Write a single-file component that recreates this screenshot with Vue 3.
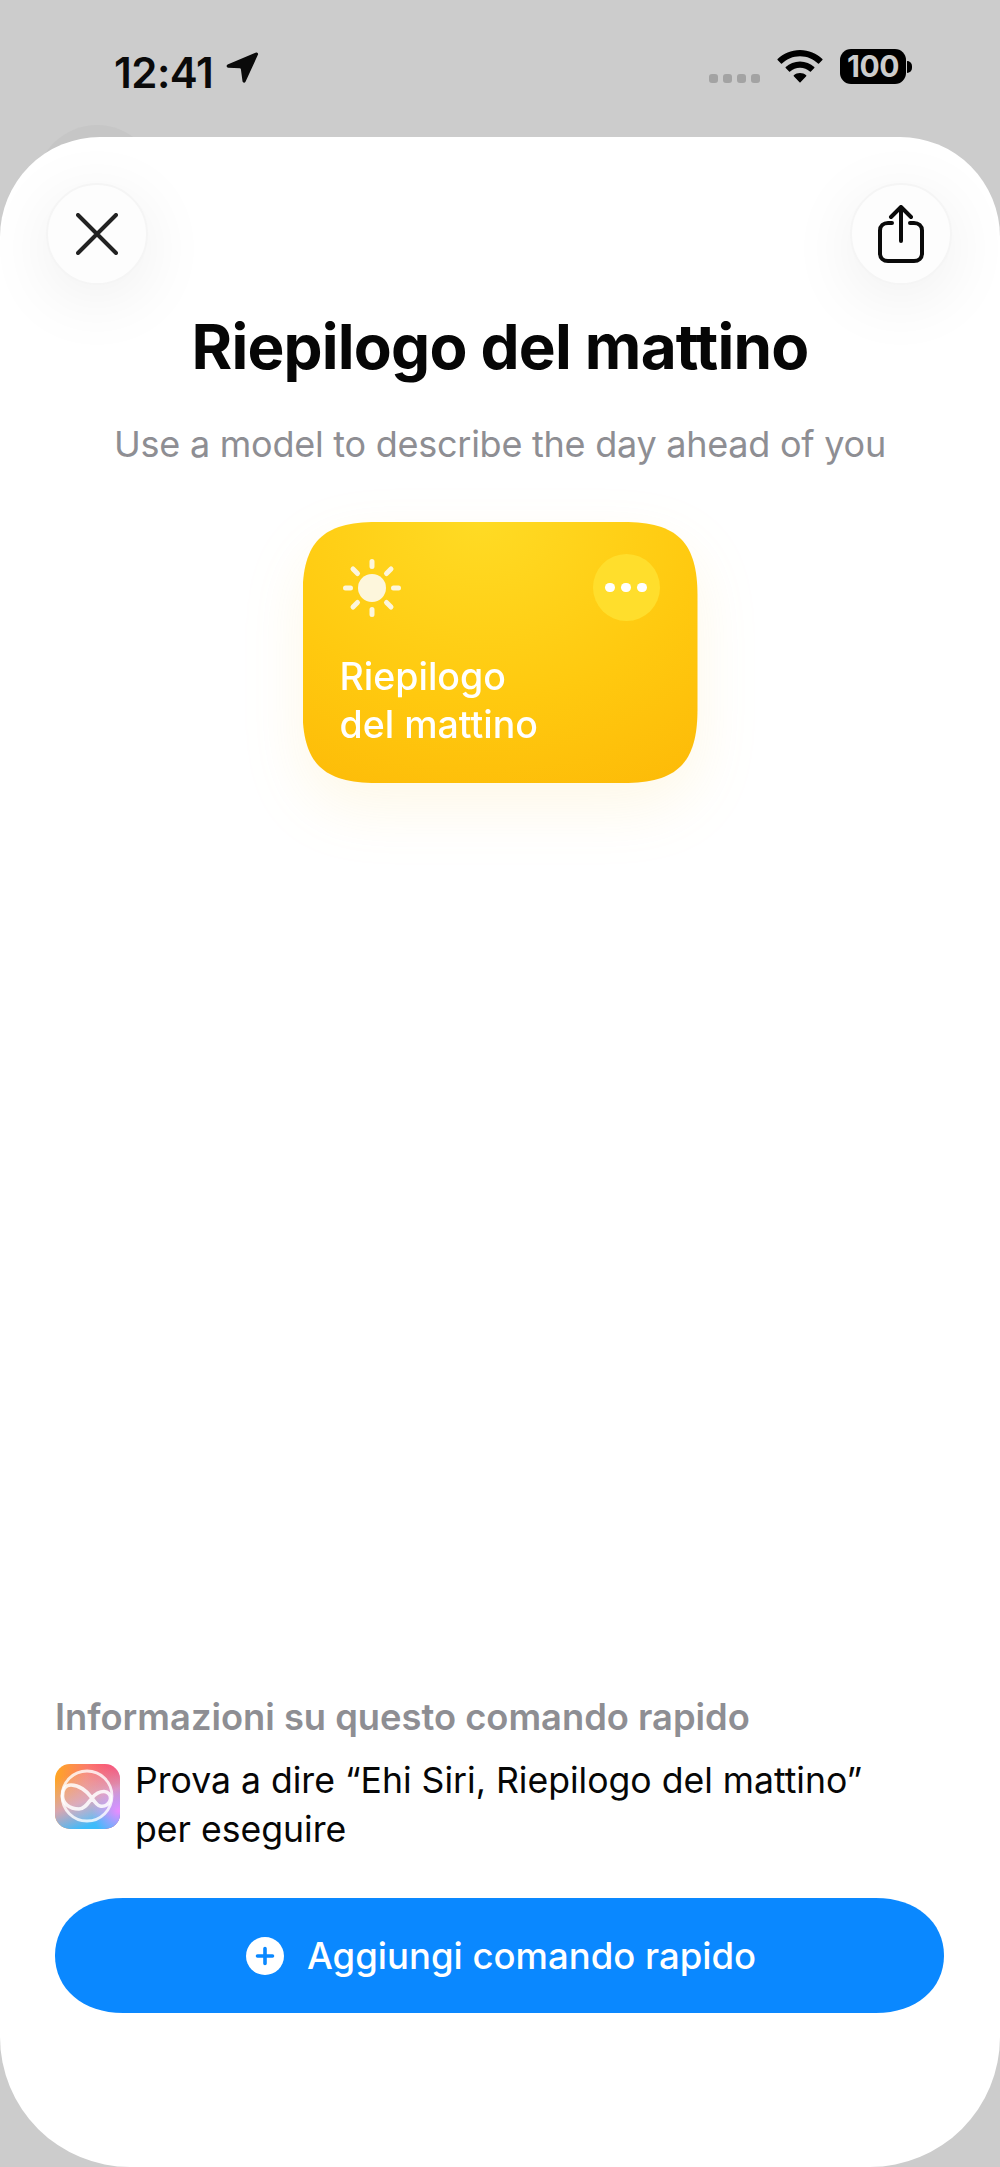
<template>
  <div class="page">
    <!-- Status bar -->
    <header class="status">
      <div class="status__left">
        <span class="status__time">12:41</span>
        <svg class="status__arrow" width="34" height="33" viewBox="0 0 34 33" aria-hidden="true">
          <path d="M31 1.600 2.600 13.600c-1.600.7-1.200 3 .6 3.100l11.600.5c.6 0 1 .4 1.100 1l1.600 12c.2 1.600 2.300 2 3 .5L33 3.600c.5-1.200-.8-2.500-2-2Z" fill="#0a0a0a" />
        </svg>
      </div>
      <div class="status__right">
        <div class="signal">
          <span v-for="n in 4" :key="n" class="signal__dot"></span>
        </div>
        <svg class="wifi" width="46" height="33" viewBox="0 0 46 33" aria-hidden="true">
          <path d="M23 0c8.800 0 16.600 3.500 22.400 9.100.3.300.3.700 0 1L42 13.600c-.3.300-.7.300-1 0C36.300 9.100 30 6.300 23 6.300S9.700 9.100 5 13.600c-.3.300-.7.300-1 0L.6 10.100c-.3-.3-.3-.7 0-1C6.400 3.500 14.200 0 23 0Z" fill="#000" />
          <path d="M23 11.500c5.500 0 10.500 2.100 14.300 5.600.3.300.3.700 0 1l-3.400 3.500c-.3.300-.7.300-1 0-2.600-2.400-6.100-3.800-9.900-3.800s-7.300 1.400-9.900 3.800c-.3.300-.7.300-1 0l-3.400-3.500c-.3-.3-.3-.7 0-1 3.800-3.500 8.800-5.600 14.300-5.600Z" fill="#000" />
          <path d="M23 23c2.400 0 4.500.8 6.200 2.200.3.300.3.700 0 1l-5.700 6c-.3.300-.7.300-1 0l-5.700-6c-.3-.3-.3-.7 0-1C18.500 23.800 20.600 23 23 23Z" fill="#000" />
        </svg>
        <div class="battery">
          <span class="battery__body">100</span>
          <span class="battery__cap"></span>
        </div>
      </div>
    </header>

    <!-- Sheet -->
    <main class="sheet">
      <span class="sheet__ghost"></span>
      <div class="sheet__top">
        <button class="round-btn" type="button" aria-label="Chiudi">
          <svg width="42" height="42" viewBox="0 0 42 42" aria-hidden="true">
            <path d="M2 2 40 40M40 2 2 40" stroke="#222" stroke-width="4" stroke-linecap="round" fill="none" />
          </svg>
        </button>
        <button class="round-btn" type="button" aria-label="Condividi">
          <svg width="46" height="58" viewBox="0 0 46 58" aria-hidden="true">
            <path d="M14 18H10c-4.500 0-8 3-8 7.500v23c0 4.500 3.500 7.500 8 7.500h26c4.500 0 8-3 8-7.500v-23c0-4.500-3.500-7.500-8-7.500h-4" stroke="#0a0a0a" stroke-width="4" fill="none" stroke-linecap="round" />
            <path d="M23 36V3M13 12l10-10 10 10" stroke="#0a0a0a" stroke-width="4" fill="none" stroke-linecap="round" stroke-linejoin="round" />
          </svg>
        </button>
      </div>

      <h1 class="title">Riepilogo del mattino</h1>
      <p class="subtitle">Use a model to describe the day ahead of you</p>

      <div class="card-wrap">
        <section class="card">
          <div class="card__top">
            <svg class="card__sun" width="60" height="60" viewBox="0 0 60 60" aria-hidden="true">
              <circle cx="30" cy="30" r="14" fill="#fdf6dc" />
              <g stroke="#fdf6dc" stroke-width="5" stroke-linecap="round">
                <path d="M30 3.500v5M30 51.500v5M3.500 30h5M51.500 30h5M11 11l4.500 4.500M49 49l-4.500-4.500M49 11l-4.500 4.500M11 49l4.500-4.500" />
              </g>
            </svg>
            <span class="card__more">
              <i></i><i></i><i></i>
            </span>
          </div>
          <div class="card__name">Riepilogo<br />del mattino</div>
        </section>
      </div>

      <div class="spacer"></div>

      <section class="info">
        <h2 class="info__label">Informazioni su questo comando rapido</h2>
        <div class="info__row">
          <svg class="info__icon" width="65" height="65" viewBox="0 0 65 65" aria-hidden="true">
            <defs>
              <linearGradient id="siriA" x1="0" y1="0" x2="1" y2="0.15">
                <stop offset="0" stop-color="#ffa91f" />
                <stop offset="0.5" stop-color="#fb7a6c" />
                <stop offset="1" stop-color="#ff2f73" />
              </linearGradient>
              <linearGradient id="siriB" x1="0.1" y1="0.2" x2="0.4" y2="1">
                <stop offset="0" stop-color="#d8b8a8" stop-opacity="0" />
                <stop offset="0.55" stop-color="#d2a8c4" stop-opacity="0.85" />
                <stop offset="1" stop-color="#3cbcfb" />
              </linearGradient>
              <radialGradient id="siriC" cx="0.98" cy="0.72" r="0.42">
                <stop offset="0" stop-color="#ea8cff" />
                <stop offset="1" stop-color="#ea8cff" stop-opacity="0" />
              </radialGradient>
            </defs>
            <rect width="65" height="65" rx="15" fill="url(#siriA)" />
            <rect width="65" height="65" rx="15" fill="url(#siriB)" />
            <rect width="65" height="65" rx="15" fill="url(#siriC)" />
            <circle cx="32" cy="32" r="25" fill="#fff" fill-opacity="0.1" stroke="#fff" stroke-opacity="0.8" stroke-width="2.800" />
            <path d="M37 34C32 27 24 21 16 21 10 21 7.500 26 7.500 32 7.500 39 14 45 24 45 30 45 33 39 37 34 41 29 45 27.500 49 27.500 53 27.500 56 31 55.500 35 55 40 50 43 45 42 42 41.500 39 37 37 34Z" fill="none" stroke="#fff" stroke-opacity="0.85" stroke-width="3.600" />
          </svg>
          <p class="info__text">Prova a dire “Ehi Siri, Riepilogo del mattino”<br />per eseguire</p>
        </div>
      </section>

      <button class="add-btn" type="button">
        <svg width="38" height="38" viewBox="0 0 38 38" aria-hidden="true">
          <circle cx="19" cy="19" r="19" fill="#fff" />
          <path d="M19 11.500v15M11.500 19h15" stroke="#0a88ff" stroke-width="3.600" stroke-linecap="round" />
        </svg>
        <span>Aggiungi comando rapido</span>
      </button>
    </main>
  </div>
</template>

<script setup>
</script>

<style>
html,
body {
  margin: 0;
  background: #cccccc;
}
</style>

<style scoped>
.page {
  width: 1000px;
  height: 2167px;
  display: flex;
  flex-direction: column;
  background: #cccccc;
  font-family: Inter, "Liberation Sans", sans-serif;
  overflow: hidden;
  isolation: isolate;
}

/* Status bar */
.status {
  height: 137px;
  flex-shrink: 0;
  display: flex;
  justify-content: space-between;
  padding: 48px 88px 0 114px;
  box-sizing: border-box;
}
.status__left {
  display: flex;
  align-items: flex-start;
  gap: 12px;
}
.status__time {
  font-size: 42px;
  line-height: 50px;
  font-weight: 600;
  color: #0a0a0a;
  letter-spacing: -0.5px;
}
.status__arrow {
  margin-top: 3px;
}
.status__right {
  display: flex;
  align-items: flex-start;
}
.signal {
  display: flex;
  gap: 5px;
  margin-top: 26px;
  margin-right: 17px;
}
.signal__dot {
  width: 9px;
  height: 9px;
  border-radius: 3px;
  background: #a3a3a3;
}
.wifi {
  margin-top: 2px;
  margin-right: 17px;
}
.battery {
  display: flex;
  align-items: center;
  margin-top: 1px;
}
.battery__body {
  width: 66px;
  height: 35px;
  border-radius: 11px;
  background: #000;
  color: #ccc;
  font-size: 30px;
  font-weight: 700;
  line-height: 35px;
  text-align: center;
  letter-spacing: -0.5px;
}
.battery__cap {
  width: 5px;
  height: 12px;
  margin-left: 1px;
  border-radius: 0 5px 5px 0;
  background: #000;
}

/* Sheet */
.sheet {
  position: relative;
  flex: 1;
  display: flex;
  flex-direction: column;
  align-items: center;
  background: #fff;
  border-radius: 100px 100px 130px 130px;
  padding: 46px 48px 0 46px;
}
/* card peeking out from behind the sheet */
.sheet__ghost {
  position: absolute;
  left: 36px;
  top: -12px;
  width: 122px;
  height: 122px;
  border-radius: 50%;
  background: #c6c6c6;
  z-index: -1;
}
.sheet__top {
  width: 100%;
  display: flex;
  justify-content: space-between;
}
.round-btn {
  width: 102px;
  height: 102px;
  padding: 0;
  display: flex;
  align-items: center;
  justify-content: center;
  border: 2px solid #f5f5f5;
  border-radius: 50%;
  background: #fdfdfd;
  box-shadow: 0 14px 70px rgba(0, 0, 0, 0.07);
}
.title {
  margin: 26px 0 0;
  font-size: 62px;
  line-height: 72px;
  font-weight: 700;
  color: #060606;
  letter-spacing: -0.8px;
  transform: translateX(1px);
}
.subtitle {
  margin: 39px 0 0;
  font-size: 36px;
  line-height: 44px;
  color: #8e8e93;
  letter-spacing: -0.25px;
  transform: translateX(1px);
}

/* Card */
.card-wrap {
  margin-top: 56px;
  filter: drop-shadow(0 24px 30px rgba(250, 200, 60, 0.12));
  transform: translateX(1px);
}
.card {
  width: 395px;
  height: 261px;
  padding: 32px 38px 34px 37px;
  box-sizing: border-box;
  display: flex;
  flex-direction: column;
  justify-content: space-between;
  clip-path: path("M74 0H321C375 0 395 20 395 74V187C395 241 375 261 321 261H74C20 261 0 241 0 187V74C0 20 20 0 74 0Z");
  background: radial-gradient(95% 115% at 45% 0%, #ffdb24 0%, #ffc90f 60%, #fdbb08 100%);
}
.card__top {
  display: flex;
  justify-content: space-between;
  align-items: flex-start;
}
.card__sun {
  margin: 4px 0 0 2px;
}
.card__more {
  width: 67px;
  height: 67px;
  display: flex;
  align-items: center;
  justify-content: center;
  gap: 6.500px;
  border-radius: 50%;
  background: #ffde2c;
}
.card__more i {
  width: 9.500px;
  height: 9.500px;
  border-radius: 50%;
  background: #fff;
}
.card__name {
  font-size: 37.500px;
  line-height: 48px;
  font-weight: 500;
  color: #fff;
}
.spacer {
  flex: 1;
}

/* Info */
.info {
  align-self: stretch;
  margin: 0 8px 0 9px;
}
.info__label {
  margin: 0;
  font-size: 36.300px;
  line-height: 44px;
  font-weight: 600;
  color: #8e8e93;
}
.info__row {
  display: flex;
  align-items: flex-start;
  gap: 15px;
  margin-top: 17px;
}
.info__icon {
  flex-shrink: 0;
  margin-top: 8px;
}
.info__text {
  margin: 0;
  font-size: 35.600px;
  line-height: 49px;
  color: #060606;
  white-space: nowrap;
}

/* Add button */
.add-btn {
  align-self: stretch;
  height: 115px;
  margin: 44px 8px 154px 9px;
  padding: 0 0 0 3px;
  display: flex;
  align-items: center;
  justify-content: center;
  gap: 23px;
  border: 0;
  clip-path: path("M68 0H821C861 0 889 24 889 57.500C889 91 861 115 821 115H68C28 115 0 91 0 57.500C0 24 28 0 68 0Z");
  background: #0a88ff;
  color: #fff;
  font-family: inherit;
  font-size: 36.500px;
  font-weight: 500;
}
</style>
